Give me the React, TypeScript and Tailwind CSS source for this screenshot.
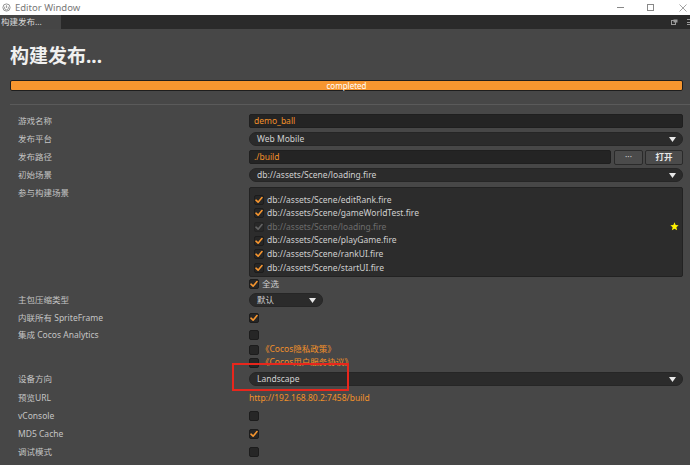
import React from "react";

const font = { fontFamily: '"Noto Sans","Noto Sans CJK SC",sans-serif' };

function Check({ checked, disabled }: { checked?: boolean; disabled?: boolean }) {
  return (
    <div className={"w-[10px] h-[10px] rounded-[2px] bg-[#262626] border border-[#1c1c1c] flex items-center justify-center shrink-0 " + (disabled ? "opacity-50" : "")}>
      {checked && (
        <svg width="8" height="8" viewBox="0 0 8 8">
          <path d="M1 4.2 L3.1 6.2 L7 1.6" fill="none" stroke={disabled ? "#9a9a9a" : "#f7962f"} strokeWidth="1.6" strokeLinecap="round" strokeLinejoin="round" />
        </svg>
      )}
    </div>
  );
}

function Arrow() {
  return (
    <svg width="7" height="5" viewBox="0 0 7 5" className="shrink-0">
      <path d="M0 0 H7 L3.5 5 Z" fill="#e8e8e8" />
    </svg>
  );
}

function Select({ text, w }: { text: string; w?: string }) {
  return (
    <div className={"h-[14px] rounded-full bg-[#2b2b2b] border border-[#262626] flex items-center justify-between pl-[7px] pr-[6px] text-[#d0d0d0] " + (w ?? "flex-1")}>
      <span>{text}</span>
      <Arrow />
    </div>
  );
}

function Row({ label, children, h = "h-[18px]" }: { label?: string; children?: React.ReactNode; h?: string }) {
  return (
    <div className={"flex items-center " + h}>
      <div className="w-[231px] shrink-0 text-[#c4c4c4]">{label}</div>
      <div className="flex-1 flex items-center min-w-0">{children}</div>
    </div>
  );
}

const scenes = [
  { p: "db://assets/Scene/editRank.fire", c: true },
  { p: "db://assets/Scene/gameWorldTest.fire", c: true },
  { p: "db://assets/Scene/loading.fire", c: true, d: true },
  { p: "db://assets/Scene/playGame.fire", c: true },
  { p: "db://assets/Scene/rankUI.fire", c: true },
  { p: "db://assets/Scene/startUI.fire", c: true },
];

export default function App() {
  return (
    <div className="relative w-[690px] h-[465px] overflow-hidden bg-[#474747] text-[8.5px] leading-none" style={font}>
      {/* title bar */}
      <div className="h-[15px] bg-white flex items-center relative">
        <svg width="9" height="9" viewBox="0 0 10 10" className="ml-[2px]">
          <circle cx="5" cy="5" r="4" fill="none" stroke="#888" strokeWidth="1" />
          <path d="M5 2.5 V5.5 M3.3 4 A2.2 2.2 0 1 0 6.7 4" fill="none" stroke="#888" strokeWidth="0.9" />
        </svg>
        <span className="ml-[4px] text-[9.5px] text-[#777]">Editor Window</span>
        <div className="ml-auto flex items-center h-full">
          <div className="w-[7px] h-px bg-[#888] mr-[23px]" />
          <div className="w-[7px] h-[7px] border border-[#888] mr-[25px]" />
          <svg width="8" height="8" viewBox="0 0 8 8" className="mr-[3px]">
            <path d="M0.5 0.5 L7.5 7.5 M7.5 0.5 L0.5 7.5" stroke="#999" strokeWidth="0.9" />
          </svg>
        </div>
      </div>
      {/* tab bar */}
      <div className="h-[14px] bg-[#2a2a2a] flex items-end">
        <div className="h-[14px] w-[61px] bg-[#454545] text-[#dadada] text-[8.5px] flex items-center pl-[1px]">构建发布...</div>
        <div className="ml-auto flex items-center h-full gap-[9px] pr-0">
          <svg width="7" height="6" viewBox="0 0 7 6">
            <rect x="0.5" y="1.5" width="4" height="4" fill="none" stroke="#9a9a9a" />
            <rect x="2.5" y="0.5" width="4" height="3" fill="#9a9a9a" />
          </svg>
          <div className="w-[3px] h-[6px] flex flex-col justify-between">
            <div className="h-px bg-[#9a9a9a]" />
            <div className="h-px bg-[#9a9a9a]" />
            <div className="h-px bg-[#9a9a9a]" />
          </div>
        </div>
      </div>
      {/* content */}
      <div className="pl-[10px]">
        <div className="mt-[17px] h-[20px] flex items-center text-[19px] font-bold text-[#f0f0f0]">构建发布...</div>
        <div className="mt-[14px] mr-[7px] h-[11px] rounded-[2px] border border-[#1e1e1e] bg-[#f7962f] flex items-center justify-center text-white text-[8px]">completed</div>
        <div className="mt-[13px] h-px bg-[#5a5a5a]" />
        <div className="mt-[7px] pl-[8px] pr-[7px]">
          <Row label="游戏名称">
            <div className="flex-1 h-[14px] bg-[#242424] border border-[#1f1f1f] rounded-[2px] flex items-center pl-[4px] text-[#f0902a]">demo_ball</div>
          </Row>
          <Row label="发布平台"><Select text="Web Mobile" /></Row>
          <Row label="发布路径">
            <div className="flex-1 h-[14px] bg-[#242424] border border-[#1f1f1f] rounded-[2px] flex items-center pl-[4px] text-[#f0902a]">./build</div>
            <div className="ml-[3px] w-[29px] h-[15px] rounded-[2px] bg-[#4b4b4b] border border-[#2a2a2a] flex items-center justify-center text-[#cfcfcf]">···</div>
            <div className="ml-[2px] w-[38px] h-[15px] rounded-[2px] bg-[#4b4b4b] border border-[#2a2a2a] flex items-center justify-center text-[#e6e6e6] font-bold">打开</div>
          </Row>
          <Row label="初始场景"><Select text="db://assets/Scene/loading.fire" /></Row>
          <div className="flex">
            <div className="w-[231px] shrink-0 text-[#c4c4c4] pt-[5px]">参与构建场景</div>
            <div className="flex-1 mt-[3px] h-[90px] bg-[#2c2c2c] border border-[#222] rounded-[2px] pt-[5px] pl-[4px] pr-[3px]">
              {scenes.map((s) => (
                <div key={s.p} className="h-[13.6px] flex items-center">
                  <Check checked={s.c} disabled={s.d} />
                  <span className={"ml-[3px] " + (s.d ? "text-[#6c6c6c]" : "text-[#cfcfcf]")}>{s.p}</span>
                  {s.d && (
                    <svg width="9" height="9" viewBox="0 0 10 10" className="ml-auto">
                      <path d="M5 0.3 L6.3 3.4 L9.6 3.7 L7.1 5.9 L7.9 9.3 L5 7.5 L2.1 9.3 L2.9 5.9 L0.4 3.7 L3.7 3.4 Z" fill="#fff200" />
                    </svg>
                  )}
                </div>
              ))}
            </div>
          </div>
          <Row h="h-[14px]">
            <Check checked />
            <span className="ml-[3px] text-[#cfcfcf]">全选</span>
          </Row>
          <Row label="主包压缩类型"><Select text="默认" w="w-[74px]" /></Row>
          <Row label="内联所有 SpriteFrame"><Check checked /></Row>
          <Row label="集成 Cocos Analytics" h="h-[16px]"><Check /></Row>
          <Row h="h-[13px]">
            <Check />
            <span className="ml-[2px] text-[#f0902a]">《Cocos隐私政策》</span>
          </Row>
          <Row h="h-[13px]">
            <Check />
            <span className="ml-[2px] text-[#f0902a]">《Cocos用户服务协议》</span>
          </Row>
          <Row label="设备方向" h="h-[20px]"><Select text="Landscape" /></Row>
          <Row label="预览URL"><span className="text-[#f0902a]">http://192.168.80.2:7458/build</span></Row>
          <Row label="vConsole"><Check /></Row>
          <Row label="MD5 Cache"><Check checked /></Row>
          <Row label="调试模式"><Check /></Row>
          <Row><Check /></Row>
        </div>
      </div>
      {/* annotation box */}
      <div className="absolute left-[232px] top-[363px] w-[117px] h-[28px] border-2 border-[#e8261c]" />
    </div>
  );
}
